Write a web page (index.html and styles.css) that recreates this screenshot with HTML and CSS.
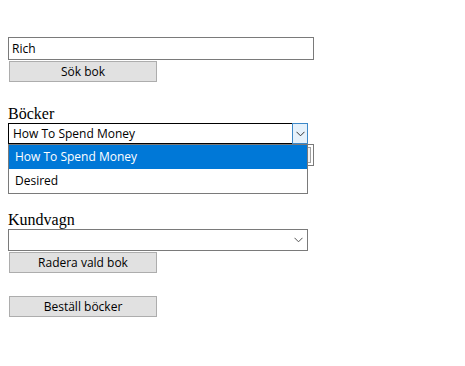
FILE: index.html
```html
<!DOCTYPE html>
<html>
	<head>
		<meta charset="utf-8">
		<title>Bokhandel</title>
		<link rel="stylesheet" href="styles.css">
	</head>
	<body>
		<div class="page">
			<div class="search">
				<input class="field" type="text" value="Rich">
				<button class="btn">Sök bok</button>
			</div>

			<div class="books">
				<div class="label">Böcker</div>
				<div class="select focused">
					<span class="value">How To Spend Money</span>
					<span class="arrow">
						<svg width="9" height="6" viewBox="0 0 9 6"><path d="M0.5 0.8 L4.5 4.8 L8.5 0.8" fill="none" stroke="#333" stroke-width="1"/></svg>
					</span>
				</div>
				<div class="number">
					<span class="spin"></span>
				</div>
				<!-- öppen lista -->
				<ul class="popup">
					<li class="active">How To Spend Money</li>
					<li>Desired</li>
				</ul>
			</div>

			<div class="cart">
				<div class="label">Kundvagn</div>
				<div class="select">
					<span class="value"></span>
					<span class="arrow">
						<svg width="9" height="6" viewBox="0 0 9 6"><path d="M0.5 0.8 L4.5 4.8 L8.5 0.8" fill="none" stroke="#555" stroke-width="1"/></svg>
					</span>
				</div>
				<button class="btn">Radera vald bok</button>
			</div>

			<button class="btn order">Beställ böcker</button>
		</div>
	</body>
</html>
```

FILE: styles.css
```css
* {
	margin: 0;
	padding: 0;
	box-sizing: border-box;
}

body {
	background: #fff;
	font-family: "Open Sans", "Noto Sans", sans-serif;
	font-size: 12px;
	color: #000;
}

.page {
	padding: 37px 0 0 8px;
}

.search,
.cart {
	display: flex;
	flex-direction: column;
	align-items: flex-start;
}

.field {
	display: block;
	width: 306px;
	height: 23px;
	border: 1px solid #7a7a7a;
	padding: 0 3px;
	font-family: inherit;
	font-size: 12px;
	color: #000;
	outline: none;
}

.btn {
	display: block;
	width: 148px;
	height: 21px;
	margin: 1px 0 0 1px;
	border: 1px solid #adadad;
	background-color: #e1e1e1;
	font-family: inherit;
	font-size: 12px;
	color: #000;
	line-height: 19px;
	text-align: center;
}

.label {
	font-family: "Liberation Serif", serif;
	font-size: 16px;
	line-height: 19px;
	height: 19px;
}

.books {
	position: relative;
	margin-top: 22px;
}

.select {
	display: flex;
	align-items: stretch;
	width: 300px;
	height: 21px;
	border: 1px solid #7a7a7a;
	background-color: #fff;
}

.select.focused {
	border-color: #000;
}

.select .value {
	flex: 1;
	padding-left: 4px;
	line-height: 19px;
}

.select .arrow {
	width: 17px;
	display: flex;
	align-items: center;
	justify-content: center;
}

.select.focused .arrow {
	width: 16px;
	background-color: #e5f1fb;
	border: 1px solid #3c88c8;
	margin: -1px -1px -1px 0;
	height: 21px;
}

.number {
	display: flex;
	justify-content: flex-end;
	width: 306px;
	height: 22px;
	border: 1px solid #7a7a7a;
	padding: 2px;
}

.number .spin {
	width: 6px;
	border: 1px solid #a0a0a0;
	background: #f0f0f0;
}

.popup {
	position: absolute;
	left: 0;
	top: 41px;
	width: 300px;
	list-style: none;
	border: 1px solid #7a7a7a;
	border-top: none;
	background-color: #fff;
}

.popup li {
	height: 24px;
	line-height: 23px;
	padding-left: 6px;
	font-size: 12px;
}

.popup li.active {
	height: 24px;
	background-color: #0078d7;
	color: #fff;
}

.cart {
	margin-top: 44px;
}

.cart .select {
	height: 22px;
}

.order {
	margin-top: 23px;
}
```
